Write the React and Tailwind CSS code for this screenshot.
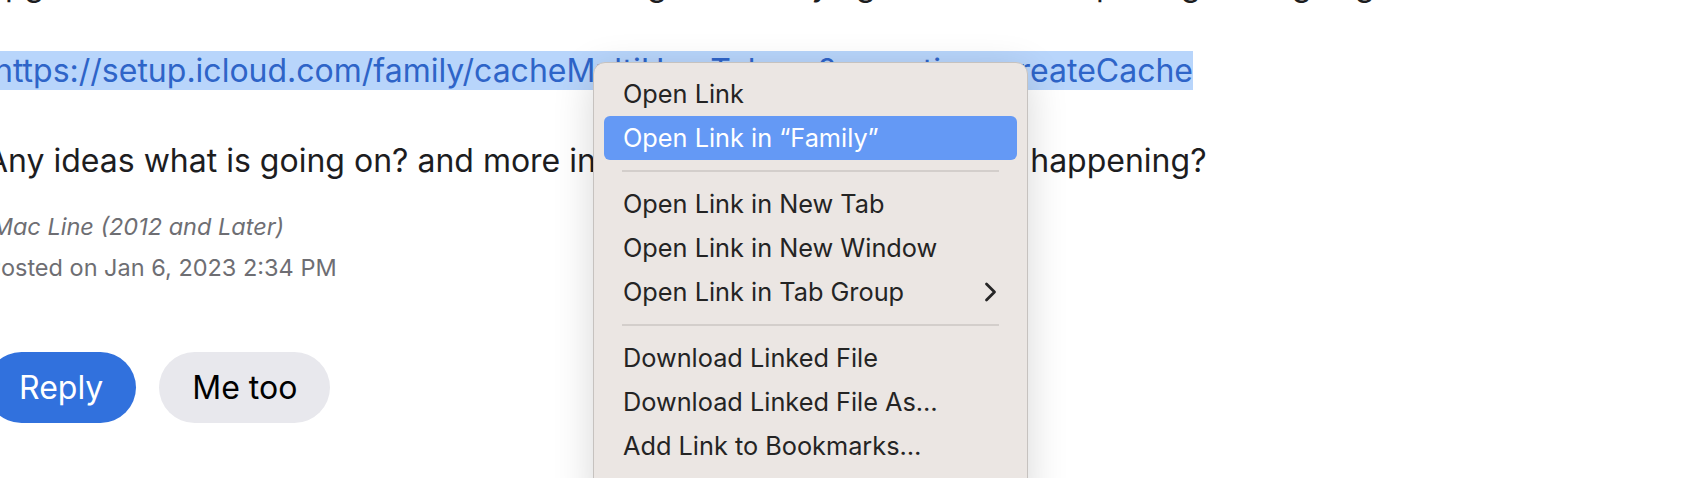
import React from 'react';

const menuGroups = [
  ['Open Link', 'Open Link in \u201CFamily\u201D'],
  ['Open Link in New Tab', 'Open Link in New Window', 'Open Link in Tab Group'],
  ['Download Linked File', 'Download Linked File As\u2026', 'Add Link to Bookmarks\u2026'],
];

const Chevron = () => (
  <svg width="13" height="20" viewBox="0 0 13 20" fill="none">
    <path d="M2.5 2l8 8-8 8" stroke="#262626" strokeWidth="2.8" strokeLinecap="round" strokeLinejoin="round" />
  </svg>
);

const ContextMenu = () => (
  <div className="absolute left-[593px] top-[62px] w-[435px] h-[440px] rounded-t-[12px] border border-[#c6c2bf] bg-[#ebe6e3] px-[10px] pt-[9px] shadow-[0_10px_40px_rgba(0,0,0,0.16)] font-['Inter'] text-[25.3px] text-[#242424]">
    {menuGroups.map((group, gi) => (
      <div key={gi}>
        {gi > 0 && (
          <div className="flex h-[22px] items-center px-[18px]">
            <div className="h-[2px] w-full bg-[#d3cecb]" />
          </div>
        )}
        {group.map((label) => {
          const active = label.startsWith('Open Link in \u201C');
          return (
            <div
              key={label}
              className={
                active
                  ? 'flex h-[44px] items-center justify-between rounded-[6px] bg-[#6499f5] pl-[19px] pr-[20px] text-white'
                  : 'flex h-[44px] items-center justify-between pl-[19px] pr-[20px]'
              }
            >
              <span className="leading-none">{label}</span>
              {label === 'Open Link in Tab Group' && <Chevron />}
            </div>
          );
        })}
      </div>
    ))}
  </div>
);

export default function App() {
  return (
    <div className="relative h-[478px] w-[1682px] overflow-hidden bg-white font-['Inter'] text-[#1d1d1f]">
      <div className="-ml-[14px] -mt-[35px] flex flex-col">
        <p className="whitespace-nowrap text-[32px] leading-[40px]">
          upgraded to the latest macOS and when I log on and trying to access the pairing settings I get stuck on this message
        </p>
        <p className="ml-[8px] mt-[46px] whitespace-nowrap text-[32px] leading-[40px]">
          <span className="bg-[#b8d5fb] text-[#2e64c8]">
            https://setup.icloud.com/family/cacheMultiUserTokens?operation=createCache
          </span>
        </p>
        <p className="mt-[50px] whitespace-nowrap text-[32px] leading-[40px]">
          Any ideas what is going on? and more informations about why this is happening?
        </p>
        <p className="mt-[31px] text-[23.5px] italic leading-[30px] text-[#6e6e73]">iMac Line (2012 and Later)</p>
        <p className="mt-[11px] text-[23.5px] leading-[30px] text-[#6e6e73]">Posted on Jan 6, 2023 2:34 PM</p>
        <div className="mt-[69px] flex gap-[23px]">
          <button className="h-[71px] rounded-full bg-[#3171dd] px-[33px] text-[32px] text-white">Reply</button>
          <button className="h-[71px] rounded-full bg-[#e8e8ed] px-[33px] text-[32px] text-black">Me too</button>
        </div>
      </div>
      <ContextMenu />
    </div>
  );
}
